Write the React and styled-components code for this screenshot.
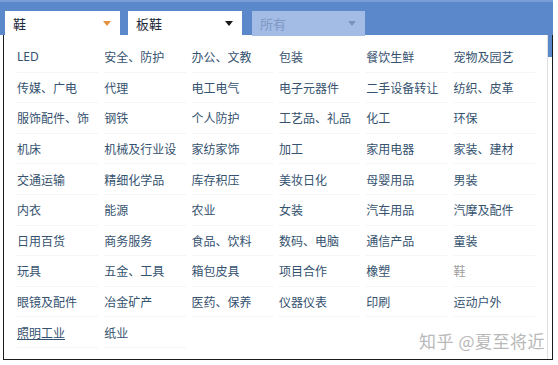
import React from 'react';
import styled, { createGlobalStyle } from 'styled-components';

const GlobalStyle = createGlobalStyle`
  body {
    margin: 0;
    background: #fff;
    font-family: "Noto Sans CJK SC", "Noto Sans", sans-serif;
  }
`;

const Panel = styled.div`
  margin-left: 3px;
  width: 548px;
  border: 1px solid #1c1c1c;
  border-top: none;
  background: #fff;
  position: relative;
`;

const Header = styled.div`
  display: flex;
  align-items: flex-start;
  height: 35px;
  box-sizing: border-box;
  padding: 9px 0 0 5px;
  margin-left: -4px;
  width: 553px;
  background: #5b87cb;
  border-top: 2px solid #7a9fd8;
`;

const Select = styled.div`
  display: flex;
  align-items: center;
  justify-content: space-between;
  box-sizing: border-box;
  width: ${p => p.w}px;
  height: 25px;
  margin-right: ${p => p.gap || 0}px;
  padding: 0 9px 0 8px;
  background: ${p => (p.disabled ? '#a2bce6' : '#fff')};
  color: ${p => (p.disabled ? '#7f97c4' : '#1e2a3a')};
  font-size: 13px;
`;

const Arrow = styled.span`
  width: 0;
  height: 0;
  border-left: 4px solid transparent;
  border-right: 4px solid transparent;
  border-top: 5px solid ${p => p.color};
`;

const Body = styled.div`
  display: flex;
`;

const Grid = styled.div`
  flex: 1;
  display: grid;
  grid-template-columns: repeat(6, 87.3px);
  grid-auto-rows: 30.6px;
  padding: 7px 0 11px 13px;
`;

const Cell = styled.div`
  display: flex;
  align-items: center;
  margin-right: 6px;
  border-bottom: 1px solid #f3f5f8;
  font-size: 12px;
  white-space: nowrap;
  color: ${p => (p.muted ? '#9d9d9d' : '#35526f')};
  text-decoration: ${p => (p.hover ? 'underline' : 'none')};
  font-family: ${p => (p.latin ? '"Noto Sans", sans-serif' : 'inherit')};
`;

const ScrollTrack = styled.div`
  width: 4px;
  border-left: 1px solid #e0e0e0;
`;

const Thumb = styled.div`
  height: 22px;
  background: #5b87cb;
`;

const Watermark = styled.div`
  position: absolute;
  right: 7px;
  bottom: 6px;
  font-size: 17px;
  color: #b8b8b8;
  letter-spacing: 0.5px;
`;

const items = [
  'LED', '安全、防护', '办公、文教', '包装', '餐饮生鲜', '宠物及园艺',
  '传媒、广电', '代理', '电工电气', '电子元器件', '二手设备转让', '纺织、皮革',
  '服饰配件、饰', '钢铁', '个人防护', '工艺品、礼品', '化工', '环保',
  '机床', '机械及行业设', '家纺家饰', '加工', '家用电器', '家装、建材',
  '交通运输', '精细化学品', '库存积压', '美妆日化', '母婴用品', '男装',
  '内衣', '能源', '农业', '女装', '汽车用品', '汽摩及配件',
  '日用百货', '商务服务', '食品、饮料', '数码、电脑', '通信产品', '童装',
  '玩具', '五金、工具', '箱包皮具', '项目合作', '橡塑', '鞋',
  '眼镜及配件', '冶金矿产', '医药、保养', '仪器仪表', '印刷', '运动户外',
  '照明工业', '纸业',
];

export default function App() {
  return (
    <>
      <GlobalStyle />
      <Panel>
        <Header>
          <Select w={115} gap={8}>
            <span>鞋</span>
            <Arrow color="#e8913c" />
          </Select>
          <Select w={114} gap={10}>
            <span>板鞋</span>
            <Arrow color="#1a1a1a" />
          </Select>
          <Select w={113} disabled>
            <span>所有</span>
            <Arrow color="#7d93bd" />
          </Select>
        </Header>
        <Body>
          <Grid>
            {items.map(name => (
              <Cell
                key={name}
                latin={name === 'LED'}
                muted={name === '鞋'}
                hover={name === '照明工业'}
              >
                {name}
              </Cell>
            ))}
          </Grid>
          <ScrollTrack>
            <Thumb />
          </ScrollTrack>
        </Body>
        <Watermark>知乎 @夏至将近</Watermark>
      </Panel>
    </>
  );
}
